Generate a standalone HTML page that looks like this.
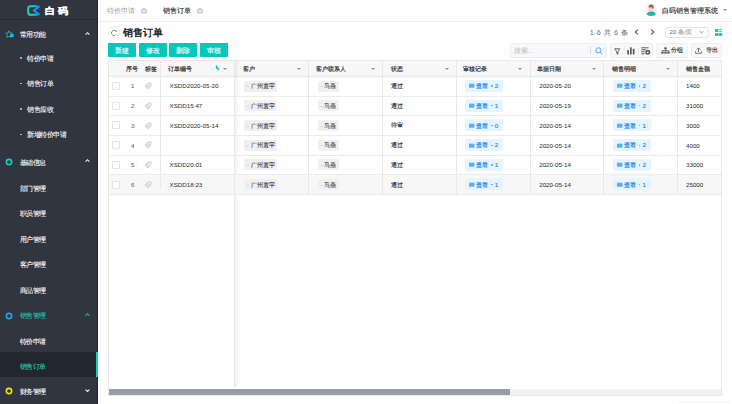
<!DOCTYPE html>
<html><head><meta charset="utf-8">
<style>
*{box-sizing:border-box;margin:0;padding:0}
html,body{width:732px;height:404px;overflow:hidden;background:#fff;font-family:"Liberation Sans",sans-serif;color:#333}
.abs{position:absolute}
#side{position:absolute;left:0;top:0;width:98px;height:404px;background:#30353f;border-right:1px solid #1f232b}
#logo{position:absolute;left:0;top:0;width:98px;height:20px;border-bottom:1px solid #272b33}
.mi{position:absolute;left:0;width:98px;height:25px;font-size:7px;letter-spacing:-0.4px;color:#f4f4f4;line-height:25px;white-space:nowrap;-webkit-text-stroke:0.12px currentColor}
.mi .t{position:absolute;left:19.5px;top:0}
.mi.sub .t{left:27px}
.mi.sub:before{content:"";position:absolute;left:20px;top:11.5px;width:1.6px;height:1.6px;border-radius:1px;background:#ccc}
.chev{position:absolute;left:85px;width:5px;height:5px}
.ring{position:absolute;left:4.9px;width:6.5px;height:6.5px;border-radius:50%;border:1.8px solid}
#hdr{position:absolute;left:98px;top:0;width:634px;height:22px;border-bottom:1px solid #ececec;background:#fff}
.tab{position:absolute;top:0.7px;height:20px;line-height:20px;font-size:7px;white-space:nowrap}
.x{position:absolute;top:7.9px;width:6px;height:6px;border-radius:50%;background:#c9d2db}
.x:after{content:"";position:absolute;left:1.8px;top:1.8px;width:2.4px;height:2.4px;border-radius:0.6px;background:#eef1f4}
.btn{position:absolute;top:43px;width:28px;height:14px;background:#02c9bb;color:#fff;font-size:6.5px;letter-spacing:-0.4px;line-height:15px;text-align:center;border-radius:1px;-webkit-text-stroke:0.1px #fff}
#tbl{position:absolute;left:108px;top:60px;width:614px;height:327px;border:1px solid #e8e8e8;border-bottom:none;overflow:hidden}
.th{position:absolute;top:0;height:16px;background:#f7f7f8;border-bottom:1px solid #e6e6e6}
.hc{position:absolute;top:0;height:16px;line-height:16px;font-size:5.5px;color:#333;-webkit-text-stroke:0.2px #333;white-space:nowrap}
.vl{position:absolute;top:0;width:1px;background:#e8e8e8;z-index:2}
.hl{position:absolute;left:0;height:1px;background:#ececec}
.arr{position:absolute;top:7px;width:0;height:0;border-left:2.2px solid transparent;border-right:2.2px solid transparent;border-top:2.5px solid #8b8f96}
.c{position:absolute;font-size:5.5px;color:#333;white-space:nowrap;line-height:8px;-webkit-text-stroke:0.15px #333}
.c.code,.c.date,.c.amt,.c.idx{font-size:6.2px;color:#333;margin-top:0.4px;-webkit-text-stroke:0.04px #333}
.c.idx{color:#666}
.gt{position:absolute;height:11px;background:#f0f0f0;font-size:5.5px;line-height:11px;color:#333;border-radius:1px;white-space:nowrap;-webkit-text-stroke:0.08px #333}
.bt{position:absolute;height:12px;background:#e6f4ff;font-size:5.5px;line-height:12px;color:#2b8def;border-radius:1px;white-space:nowrap;-webkit-text-stroke:0.2px #2b8def}
.cb{position:absolute;left:4px;width:8px;height:8px;border:1px solid #e3e3e3;border-radius:1px;background:#fff}
</style></head><body>

<div id="side">
  <div id="logo">
    <svg class="abs" style="left:27px;top:5px" width="14" height="11" viewBox="0 0 14 11">
      <defs><linearGradient id="lg" x1="0" y1="0" x2="1" y2="0"><stop offset="0.6" stop-color="#16d3b8"/><stop offset="1" stop-color="#1aa8e0"/></linearGradient></defs>
      <path d="M10.4 1.25 H3.6 Q1.25 1.25 1.25 3.6 V7.4 Q1.25 9.75 3.6 9.75 H10.4" fill="none" stroke="url(#lg)" stroke-width="2.05"/>
      <path d="M12.5 1.1 L7 5.5 L12.5 9.9" fill="none" stroke="#1b8ff4" stroke-width="2.1"/>
    </svg>
    <div class="abs" style="left:44.6px;top:4.6px;font-size:9px;line-height:12px;color:#fff;font-weight:bold;letter-spacing:3px;-webkit-text-stroke:0.45px #fff;transform:scaleX(1.12);transform-origin:0 0">白码</div>
  </div>

  <div class="mi" style="top:22px">
    <svg class="abs" style="left:4.5px;top:8px" width="9" height="9" viewBox="0 0 9 9"><path d="M4 0.8 L5 3 L7.4 3.3 L5.6 4.9 L6.1 7.4 L4 6.2 L1.9 7.4 L2.4 4.9 L0.6 3.3 L3 3 Z" fill="none" stroke="#19b9a8" stroke-width="0.9" stroke-linejoin="round"/><circle cx="7" cy="5.4" r="1.85" fill="#22b2fa"/></svg>
    <span class="t">常用功能</span>
    <svg class="chev" style="top:9.1px" viewBox="0 0 5 5"><path d="M0.6 3.6 L2.5 1.7 L4.4 3.6" fill="none" stroke="#f0f0f0" stroke-width="1.1"/></svg>
  </div>
  <div class="mi sub" style="top:45.5px"><span class="t">特价申请</span></div>
  <div class="mi sub" style="top:71px"><span class="t">销售订单</span></div>
  <div class="mi sub" style="top:96.5px"><span class="t">销售应收</span></div>
  <div class="mi sub" style="top:122px"><span class="t">新增特价申请</span></div>

  <div class="mi" style="top:149.5px">
    <svg class="abs" style="left:4.5px;top:8.8px" width="8" height="8" viewBox="0 0 8 8"><circle cx="4" cy="4" r="2.65" fill="none" stroke="#12d3bd" stroke-width="1.6"/></svg>
    <span class="t">基础信息</span>
    <svg class="chev" style="top:8.7px" viewBox="0 0 5 5"><path d="M0.6 3.6 L2.5 1.7 L4.4 3.6" fill="none" stroke="#f0f0f0" stroke-width="1.1"/></svg>
  </div>
  <div class="mi" style="top:175.5px"><span class="t">部门管理</span></div>
  <div class="mi" style="top:201px"><span class="t">职员管理</span></div>
  <div class="mi" style="top:226.5px"><span class="t">用户管理</span></div>
  <div class="mi" style="top:252px"><span class="t">客户管理</span></div>
  <div class="mi" style="top:278px"><span class="t">商品管理</span></div>

  <div class="mi" style="top:303px;color:#1bbfae">
    <svg class="abs" style="left:4.5px;top:8.8px" width="8" height="8" viewBox="0 0 8 8"><circle cx="4" cy="4" r="2.65" fill="none" stroke="#19a8f0" stroke-width="1.6"/></svg>
    <span class="t">销售管理</span>
    <svg class="chev" style="top:8.7px" viewBox="0 0 5 5"><path d="M0.6 3.6 L2.5 1.7 L4.4 3.6" fill="none" stroke="#1bbfae" stroke-width="1.1"/></svg>
  </div>
  <div class="mi" style="top:328.5px"><span class="t">特价申请</span></div>
  <div class="mi" style="top:352px;background:#22262e;color:#1fc6b2"><span class="t" style="top:1.8px">销售订单</span><span class="abs" style="left:96px;top:0;width:2px;height:25px;background:#14d0bd"></span></div>
  <div class="mi" style="top:378.5px">
    <svg class="abs" style="left:4.5px;top:8.8px" width="8" height="8" viewBox="0 0 8 8"><circle cx="4" cy="4" r="2.65" fill="none" stroke="#f2e61a" stroke-width="1.6"/></svg>
    <span class="t">财务管理</span>
    <svg class="chev" style="top:9px" viewBox="0 0 5 5"><path d="M0.6 1.6 L2.5 3.5 L4.4 1.6" fill="none" stroke="#f0f0f0" stroke-width="1.1"/></svg>
  </div>
</div>

<div class="abs" style="left:100px;top:0;width:1px;height:404px;background:#f4f4f4;z-index:5"></div>
<div id="hdr">
  <div class="tab" style="left:9px;color:#a0a0a0">特价申请</div>
  <div class="x" style="left:43px"></div>
  <div class="tab" style="left:65px;color:#333;-webkit-text-stroke:0.15px #333">销售订单</div>
  <div class="x" style="left:99px"></div>
  <svg class="abs" style="left:547.2px;top:4.2px" width="12" height="12" viewBox="0 0 12 12">
    <circle cx="6" cy="6" r="6" fill="#fcefe8"/>
    <path d="M1.8 10.4 Q2.2 7.6 6.2 7.3 Q10.4 7.6 10.9 10.2 Q9 12.1 6.2 12 Q3.5 12 1.8 10.4Z" fill="#1cb8b4"/>
    <path d="M3.8 3.2 Q3.8 7.8 5.6 7.9 Q7.6 7.8 7.6 3.2 Z" fill="#f8d2bd"/>
    <path d="M3.6 3.6 Q3.4 0.6 6.2 0.5 Q8.8 0.6 8.7 3.6 Q8.6 5.2 7.6 5.6 Q7.8 3.8 6.8 3.2 Q5 3.4 3.6 3.6Z" fill="#9a5a5c"/>
  </svg>
  <div class="tab" style="left:564px;color:#333;-webkit-text-stroke:0.15px #333">白码销售管理系统</div>
  <div class="abs" style="left:625px;top:9px;border-left:2px solid transparent;border-right:2px solid transparent;border-top:2.5px solid #8b8f96"></div>
</div>

<!-- title -->
<div class="abs" style="left:108px;top:26.3px;width:12px;height:12px;border-radius:50%;border:1px solid #ececec"></div>
<svg class="abs" style="left:110px;top:28.5px" width="8" height="8" viewBox="0 0 8 8"><path d="M5.9 2.3 A2.55 2.55 0 1 0 5.9 5.7" fill="none" stroke="#808080" stroke-width="0.9"/><path d="M4.8 1.5 L6.8 1.2 L6.5 3.2 Z" fill="#808080"/></svg>
<div class="abs" style="left:123px;top:26px;font-size:10px;line-height:13px;font-weight:bold;color:#222">销售订单</div>

<div class="btn" style="left:108px">新建</div>
<div class="btn" style="left:139px">修改</div>
<div class="btn" style="left:169px">删除</div>
<div class="btn" style="left:200px">审核</div>

<!-- pagination -->
<div class="abs" style="left:590px;top:28px;font-size:6.5px;line-height:9px;color:#777;white-space:nowrap;-webkit-text-stroke:0.1px #777;letter-spacing:0.55px;word-spacing:0.5px">1-6 共 6 条</div>
<svg class="abs" style="left:634px;top:29px" width="5" height="6" viewBox="0 0 5 6"><path d="M3.8 0.6 L1.3 3 L3.8 5.4" fill="none" stroke="#4a566a" stroke-width="1.1"/></svg>
<svg class="abs" style="left:650px;top:29px" width="5" height="6" viewBox="0 0 5 6"><path d="M1.2 0.6 L3.7 3 L1.2 5.4" fill="none" stroke="#4a566a" stroke-width="1.1"/></svg>
<div class="abs" style="left:665px;top:27px;width:44px;height:10.5px;border:1px solid #e3e3e3;border-radius:2px"></div>
<div class="abs" style="left:669.5px;top:28.3px;font-size:6px;line-height:9px;color:#666;white-space:nowrap;letter-spacing:0.15px">20 条/页</div>
<svg class="abs" style="left:699px;top:30px" width="5" height="4" viewBox="0 0 5 4"><path d="M0.5 0.9 L2.5 2.9 L4.5 0.9" fill="none" stroke="#888" stroke-width="0.85"/></svg>
<svg class="abs" style="left:714.7px;top:28.9px" width="7.4" height="7.2" viewBox="0 0 7.4 7.2">
  <rect x="0" y="0" width="3.5" height="3.1" rx="1.1" fill="#12c6b2"/>
  <rect x="0" y="3.9" width="3.5" height="3.3" rx="1.1" fill="#12c6b2"/>
  <rect x="3.9" y="3.9" width="3.5" height="3.3" rx="1.1" fill="#12c6b2"/>
  <path d="M4.1 0.5 H6.1 Q7.1 0.5 7.1 1.55 Q7.1 2.6 6.1 2.6 H4.1" fill="none" stroke="#12c6b2" stroke-width="0.9"/>
</svg>

<!-- search & tools -->
<div class="abs" style="left:509.5px;top:43px;width:97.5px;height:14.7px;background:#f7f8f9;border:1px solid #efefef;border-radius:2px"></div>
<div class="abs" style="left:514px;top:46px;font-size:6.5px;line-height:9px;color:#bbb">搜索...</div>
<div class="abs" style="left:590px;top:46px;width:1px;height:8px;background:#ddd"></div>
<svg class="abs" style="left:595px;top:47px" width="8" height="8" viewBox="0 0 8 8"><circle cx="3.4" cy="3.4" r="2.6" fill="none" stroke="#3c9bf0" stroke-width="0.9"/><path d="M5.3 5.3 L7.2 7.2" stroke="#3c9bf0" stroke-width="0.9"/></svg>

<div class="abs" style="left:609.5px;top:43px;width:43.5px;height:14.7px;background:#f7f8f9;border:1px solid #efefef;border-radius:2px"></div>
<div class="abs" style="left:624px;top:46px;width:1px;height:8px;background:#f0f0f0"></div>
<div class="abs" style="left:638px;top:46px;width:1px;height:8px;background:#f0f0f0"></div>
<svg class="abs" style="left:614px;top:47.6px" width="7" height="7" viewBox="0 0 7 7"><path d="M0.7 0.8 H5.5 Q6.2 0.8 5.8 1.5 L3.9 3.4 V6.2 L2.8 5.6 V3.4 L0.9 1.5 Q0.5 0.8 0.7 0.8Z" fill="none" stroke="#555" stroke-width="0.95" stroke-linejoin="round"/></svg>
<svg class="abs" style="left:627.4px;top:47px" width="8" height="8" viewBox="0 0 8 8"><rect x="0.2" y="3" width="1.7" height="4.6" rx="0.5" fill="#5a5a5a"/><rect x="3" y="0.2" width="1.7" height="7.4" rx="0.5" fill="#5a5a5a"/><rect x="5.8" y="1.8" width="1.7" height="5.8" rx="0.5" fill="#5a5a5a"/></svg>
<svg class="abs" style="left:641px;top:47px" width="10" height="8" viewBox="0 0 10 8"><path d="M0.3 0.8 H7.5 M0.3 2.8 H5 M0.3 4.8 H3.6 M0.3 6.8 H3.6" stroke="#5a5a5a" stroke-width="1"/><circle cx="6.8" cy="5.3" r="2.5" fill="#5a5a5a"/><circle cx="6.8" cy="5.3" r="0.9" fill="#fff"/></svg>

<div class="abs" style="left:656px;top:43px;width:31.6px;height:14.7px;background:#f7f8f9;border:1px solid #efefef;border-radius:2px"></div>
<svg class="abs" style="left:660.5px;top:47px" width="9" height="7" viewBox="0 0 9 7"><rect x="3.3" y="0.3" width="2.4" height="2" fill="#555"/><path d="M4.5 2.3 V3.5 M1.5 3.5 H7.5 M1.5 3.5 V4.6 M7.5 3.5 V4.6 M4.5 3.5 V4.6" stroke="#555" stroke-width="0.7" fill="none"/><rect x="0.3" y="4.6" width="2.4" height="2" fill="#555"/><rect x="3.3" y="4.6" width="2.4" height="2" fill="#555"/><rect x="6.3" y="4.6" width="2.4" height="2" fill="#555"/></svg>
<div class="abs" style="left:671px;top:46px;font-size:6px;line-height:9px;color:#333;-webkit-text-stroke:0.15px #333">分组</div>

<div class="abs" style="left:690.5px;top:43px;width:31.5px;height:14.7px;background:#f7f8f9;border:1px solid #efefef;border-radius:2px"></div>
<svg class="abs" style="left:694.5px;top:47px" width="7" height="7" viewBox="0 0 7 7"><path d="M3.5 5 V1 M1.8 2.6 L3.5 0.9 L5.2 2.6 M0.6 4.2 V6.3 H6.4 V4.2" fill="none" stroke="#555" stroke-width="0.8"/></svg>
<div class="abs" style="left:705.5px;top:46px;font-size:6px;line-height:9px;color:#333;-webkit-text-stroke:0.15px #333">导出</div>

<!-- table -->
<div id="tbl">
  <div class="th" style="left:0;width:612px"></div>
  <!-- frozen shadow -->
  <div class="abs" style="left:125.3px;top:0;width:5px;height:336px;background:linear-gradient(to right,rgba(0,0,0,0.07),rgba(0,0,0,0))"></div>
  <div class="vl" style="left:51.3px;height:128px"></div>
  <div class="vl" style="left:125.3px;height:336px"></div>
  <div class="vl" style="left:199.4px;height:133px"></div>
  <div class="vl" style="left:273px;height:133px"></div>
  <div class="vl" style="left:347.4px;height:133px"></div>
  <div class="vl" style="left:421.4px;height:133px"></div>
  <div class="vl" style="left:494.2px;height:133px"></div>
  <div class="vl" style="left:568.4px;height:133px"></div>

  <div class="hc" style="left:17px">序号</div>
  <div class="hc" style="left:35.8px">标签</div>
  <div class="hc" style="left:59.2px">订单编号</div>
  <svg class="abs" style="left:106.3px;top:3.8px" width="6" height="7" viewBox="0 0 6 7"><path d="M0.5 0.6 Q1.4 -0.1 2.1 0.5 L2.6 2.3 L4.1 3.4 Q4.3 4.4 3.5 4.7 L1.5 4.3 L0.9 2.4 Z" fill="#12c6b2"/><path d="M3 4.4 L4.2 6.1" stroke="#12c6b2" stroke-width="0.7"/></svg>
  <div class="arr" style="left:114.1px"></div>

  <div class="hc" style="left:133.5px">客户</div><div class="arr" style="left:188px"></div>
  <div class="hc" style="left:207px">客户联系人</div><div class="arr" style="left:262px"></div>
  <div class="hc" style="left:282px">状态</div><div class="arr" style="left:336px"></div>
  <div class="hc" style="left:354.3px">审核记录</div><div class="arr" style="left:409px"></div>
  <div class="hc" style="left:428.3px">单据日期</div><div class="arr" style="left:483px"></div>
  <div class="hc" style="left:503px">销售明细</div><div class="arr" style="left:557px"></div>
  <div class="hc" style="left:577px">销售金额</div>

  <!--ROWS--><div class="hl" style="top:34.50px;width:612px"></div>
<div class="cb" style="left:3.20px;top:21.05px"></div>
<div class="c idx" style="left:21.90px;top:21.05px">1</div>
<svg class="abs" style="left:34.80px;top:21.15px" width="8" height="8" viewBox="0 0 8 8"><path d="M4.3 1 H7 V3.7 L3.8 6.9 L1.1 4.2 Z" fill="#dedede" stroke="#d8d8d8" stroke-width="1.1" stroke-linejoin="round"/><circle cx="5.4" cy="2.6" r="0.75" fill="#fff"/></svg>
<div class="c code" style="left:60.60px;top:21.05px">XSDD2020-05-20</div>
<div class="gt" style="left:135.10px;top:19.65px;width:32.8px"><span style="position:absolute;left:3px;top:0.6px;color:#555">·</span><span style="position:absolute;left:6.6px;top:0.6px">广州寰宇</span></div>
<div class="gt" style="left:208.80px;top:19.65px;width:20.8px"><span style="position:absolute;left:3px;top:0.6px;color:#555">·</span><span style="position:absolute;left:6.6px;top:0.6px">马燕</span></div>
<div class="c" style="left:282.40px;top:21.05px">通过</div>
<div class="bt" style="left:356.30px;top:18.85px;width:38px"><svg class="abs" style="left:3.7px;top:3.6px" width="6" height="6" viewBox="0 0 6 6"><rect x="0" y="0.6" width="5.4" height="4.4" rx="0.5" fill="#7dc1f8"/><path d="M0 1.9 H5.4 M0 3.1 H5.4" stroke="#3f9ff2" stroke-width="0.8"/></svg><span style="position:absolute;left:11px;top:0.5px">查看</span><span style="position:absolute;left:26.2px;top:5.6px;width:1.3px;height:1.3px;border-radius:50%;background:#5aaaf2"></span><span style="position:absolute;left:29.5px;top:0.5px;font-size:6.2px">2</span></div>
<div class="bt" style="left:504.00px;top:18.85px;width:38px"><svg class="abs" style="left:3.7px;top:3.6px" width="6" height="6" viewBox="0 0 6 6"><rect x="0" y="0.6" width="5.4" height="4.4" rx="0.5" fill="#7dc1f8"/><path d="M0 1.9 H5.4 M0 3.1 H5.4" stroke="#3f9ff2" stroke-width="0.8"/></svg><span style="position:absolute;left:11px;top:0.5px">查看</span><span style="position:absolute;left:26.2px;top:5.6px;width:1.3px;height:1.3px;border-radius:50%;background:#5aaaf2"></span><span style="position:absolute;left:29.5px;top:0.5px;font-size:6.2px">2</span></div>
<div class="c date" style="left:430.20px;top:21.05px">2020-05-20</div>
<div class="c amt" style="left:577.00px;top:21.05px">1400</div>
<div class="hl" style="top:54.20px;width:612px"></div>
<div class="cb" style="left:3.20px;top:40.75px"></div>
<div class="c idx" style="left:21.90px;top:40.75px">2</div>
<svg class="abs" style="left:34.80px;top:40.85px" width="8" height="8" viewBox="0 0 8 8"><path d="M4.3 1 H7 V3.7 L3.8 6.9 L1.1 4.2 Z" fill="#dedede" stroke="#d8d8d8" stroke-width="1.1" stroke-linejoin="round"/><circle cx="5.4" cy="2.6" r="0.75" fill="#fff"/></svg>
<div class="c code" style="left:60.60px;top:40.75px">XSDD15:47</div>
<div class="gt" style="left:135.10px;top:39.35px;width:32.8px"><span style="position:absolute;left:3px;top:0.6px;color:#555">·</span><span style="position:absolute;left:6.6px;top:0.6px">广州寰宇</span></div>
<div class="gt" style="left:208.80px;top:39.35px;width:20.8px"><span style="position:absolute;left:3px;top:0.6px;color:#555">·</span><span style="position:absolute;left:6.6px;top:0.6px">马燕</span></div>
<div class="c" style="left:282.40px;top:40.75px">通过</div>
<div class="bt" style="left:356.30px;top:38.55px;width:38px"><svg class="abs" style="left:3.7px;top:3.6px" width="6" height="6" viewBox="0 0 6 6"><rect x="0" y="0.6" width="5.4" height="4.4" rx="0.5" fill="#7dc1f8"/><path d="M0 1.9 H5.4 M0 3.1 H5.4" stroke="#3f9ff2" stroke-width="0.8"/></svg><span style="position:absolute;left:11px;top:0.5px">查看</span><span style="position:absolute;left:26.2px;top:5.6px;width:1.3px;height:1.3px;border-radius:50%;background:#5aaaf2"></span><span style="position:absolute;left:29.5px;top:0.5px;font-size:6.2px">1</span></div>
<div class="bt" style="left:504.00px;top:38.55px;width:38px"><svg class="abs" style="left:3.7px;top:3.6px" width="6" height="6" viewBox="0 0 6 6"><rect x="0" y="0.6" width="5.4" height="4.4" rx="0.5" fill="#7dc1f8"/><path d="M0 1.9 H5.4 M0 3.1 H5.4" stroke="#3f9ff2" stroke-width="0.8"/></svg><span style="position:absolute;left:11px;top:0.5px">查看</span><span style="position:absolute;left:26.2px;top:5.6px;width:1.3px;height:1.3px;border-radius:50%;background:#5aaaf2"></span><span style="position:absolute;left:29.5px;top:0.5px;font-size:6.2px">2</span></div>
<div class="c date" style="left:430.20px;top:40.75px">2020-05-19</div>
<div class="c amt" style="left:577.00px;top:40.75px">31000</div>
<div class="hl" style="top:73.90px;width:612px"></div>
<div class="cb" style="left:3.20px;top:60.45px"></div>
<div class="c idx" style="left:21.90px;top:60.45px">3</div>
<svg class="abs" style="left:34.80px;top:60.55px" width="8" height="8" viewBox="0 0 8 8"><path d="M4.3 1 H7 V3.7 L3.8 6.9 L1.1 4.2 Z" fill="#dedede" stroke="#d8d8d8" stroke-width="1.1" stroke-linejoin="round"/><circle cx="5.4" cy="2.6" r="0.75" fill="#fff"/></svg>
<div class="c code" style="left:60.60px;top:60.45px">XSDD2020-05-14</div>
<div class="gt" style="left:135.10px;top:59.05px;width:32.8px"><span style="position:absolute;left:3px;top:0.6px;color:#555">·</span><span style="position:absolute;left:6.6px;top:0.6px">广州寰宇</span></div>
<div class="gt" style="left:208.80px;top:59.05px;width:20.8px"><span style="position:absolute;left:3px;top:0.6px;color:#555">·</span><span style="position:absolute;left:6.6px;top:0.6px">马燕</span></div>
<div class="c" style="left:282.40px;top:60.45px">待审</div>
<div class="bt" style="left:356.30px;top:58.25px;width:38px"><svg class="abs" style="left:3.7px;top:3.6px" width="6" height="6" viewBox="0 0 6 6"><rect x="0" y="0.6" width="5.4" height="4.4" rx="0.5" fill="#7dc1f8"/><path d="M0 1.9 H5.4 M0 3.1 H5.4" stroke="#3f9ff2" stroke-width="0.8"/></svg><span style="position:absolute;left:11px;top:0.5px">查看</span><span style="position:absolute;left:26.2px;top:5.6px;width:1.3px;height:1.3px;border-radius:50%;background:#5aaaf2"></span><span style="position:absolute;left:29.5px;top:0.5px;font-size:6.2px">0</span></div>
<div class="bt" style="left:504.00px;top:58.25px;width:38px"><svg class="abs" style="left:3.7px;top:3.6px" width="6" height="6" viewBox="0 0 6 6"><rect x="0" y="0.6" width="5.4" height="4.4" rx="0.5" fill="#7dc1f8"/><path d="M0 1.9 H5.4 M0 3.1 H5.4" stroke="#3f9ff2" stroke-width="0.8"/></svg><span style="position:absolute;left:11px;top:0.5px">查看</span><span style="position:absolute;left:26.2px;top:5.6px;width:1.3px;height:1.3px;border-radius:50%;background:#5aaaf2"></span><span style="position:absolute;left:29.5px;top:0.5px;font-size:6.2px">1</span></div>
<div class="c date" style="left:430.20px;top:60.45px">2020-05-14</div>
<div class="c amt" style="left:577.00px;top:60.45px">3000</div>
<div class="hl" style="top:93.60px;width:612px"></div>
<div class="cb" style="left:3.20px;top:80.15px"></div>
<div class="c idx" style="left:21.90px;top:80.15px">4</div>
<svg class="abs" style="left:34.80px;top:80.25px" width="8" height="8" viewBox="0 0 8 8"><path d="M4.3 1 H7 V3.7 L3.8 6.9 L1.1 4.2 Z" fill="#dedede" stroke="#d8d8d8" stroke-width="1.1" stroke-linejoin="round"/><circle cx="5.4" cy="2.6" r="0.75" fill="#fff"/></svg>
<div class="gt" style="left:135.10px;top:78.75px;width:32.8px"><span style="position:absolute;left:3px;top:0.6px;color:#555">·</span><span style="position:absolute;left:6.6px;top:0.6px">广州寰宇</span></div>
<div class="gt" style="left:208.80px;top:78.75px;width:20.8px"><span style="position:absolute;left:3px;top:0.6px;color:#555">·</span><span style="position:absolute;left:6.6px;top:0.6px">马燕</span></div>
<div class="c" style="left:282.40px;top:80.15px">通过</div>
<div class="bt" style="left:356.30px;top:77.95px;width:38px"><svg class="abs" style="left:3.7px;top:3.6px" width="6" height="6" viewBox="0 0 6 6"><rect x="0" y="0.6" width="5.4" height="4.4" rx="0.5" fill="#7dc1f8"/><path d="M0 1.9 H5.4 M0 3.1 H5.4" stroke="#3f9ff2" stroke-width="0.8"/></svg><span style="position:absolute;left:11px;top:0.5px">查看</span><span style="position:absolute;left:26.2px;top:5.6px;width:1.3px;height:1.3px;border-radius:50%;background:#5aaaf2"></span><span style="position:absolute;left:29.5px;top:0.5px;font-size:6.2px">2</span></div>
<div class="bt" style="left:504.00px;top:77.95px;width:38px"><svg class="abs" style="left:3.7px;top:3.6px" width="6" height="6" viewBox="0 0 6 6"><rect x="0" y="0.6" width="5.4" height="4.4" rx="0.5" fill="#7dc1f8"/><path d="M0 1.9 H5.4 M0 3.1 H5.4" stroke="#3f9ff2" stroke-width="0.8"/></svg><span style="position:absolute;left:11px;top:0.5px">查看</span><span style="position:absolute;left:26.2px;top:5.6px;width:1.3px;height:1.3px;border-radius:50%;background:#5aaaf2"></span><span style="position:absolute;left:29.5px;top:0.5px;font-size:6.2px">2</span></div>
<div class="c date" style="left:430.20px;top:80.15px">2020-05-14</div>
<div class="c amt" style="left:577.00px;top:80.15px">4000</div>
<div class="hl" style="top:113.30px;width:612px"></div>
<div class="cb" style="left:3.20px;top:99.85px"></div>
<div class="c idx" style="left:21.90px;top:99.85px">5</div>
<svg class="abs" style="left:34.80px;top:99.95px" width="8" height="8" viewBox="0 0 8 8"><path d="M4.3 1 H7 V3.7 L3.8 6.9 L1.1 4.2 Z" fill="#dedede" stroke="#d8d8d8" stroke-width="1.1" stroke-linejoin="round"/><circle cx="5.4" cy="2.6" r="0.75" fill="#fff"/></svg>
<div class="c code" style="left:60.60px;top:99.85px">XSDD20:01</div>
<div class="gt" style="left:135.10px;top:98.45px;width:32.8px"><span style="position:absolute;left:3px;top:0.6px;color:#555">·</span><span style="position:absolute;left:6.6px;top:0.6px">广州寰宇</span></div>
<div class="gt" style="left:208.80px;top:98.45px;width:20.8px"><span style="position:absolute;left:3px;top:0.6px;color:#555">·</span><span style="position:absolute;left:6.6px;top:0.6px">马燕</span></div>
<div class="c" style="left:282.40px;top:99.85px">通过</div>
<div class="bt" style="left:356.30px;top:97.65px;width:38px"><svg class="abs" style="left:3.7px;top:3.6px" width="6" height="6" viewBox="0 0 6 6"><rect x="0" y="0.6" width="5.4" height="4.4" rx="0.5" fill="#7dc1f8"/><path d="M0 1.9 H5.4 M0 3.1 H5.4" stroke="#3f9ff2" stroke-width="0.8"/></svg><span style="position:absolute;left:11px;top:0.5px">查看</span><span style="position:absolute;left:26.2px;top:5.6px;width:1.3px;height:1.3px;border-radius:50%;background:#5aaaf2"></span><span style="position:absolute;left:29.5px;top:0.5px;font-size:6.2px">1</span></div>
<div class="bt" style="left:504.00px;top:97.65px;width:38px"><svg class="abs" style="left:3.7px;top:3.6px" width="6" height="6" viewBox="0 0 6 6"><rect x="0" y="0.6" width="5.4" height="4.4" rx="0.5" fill="#7dc1f8"/><path d="M0 1.9 H5.4 M0 3.1 H5.4" stroke="#3f9ff2" stroke-width="0.8"/></svg><span style="position:absolute;left:11px;top:0.5px">查看</span><span style="position:absolute;left:26.2px;top:5.6px;width:1.3px;height:1.3px;border-radius:50%;background:#5aaaf2"></span><span style="position:absolute;left:29.5px;top:0.5px;font-size:6.2px">2</span></div>
<div class="c date" style="left:430.20px;top:99.85px">2020-05-14</div>
<div class="c amt" style="left:577.00px;top:99.85px">33000</div>
<div class="abs" style="left:0;top:113.80px;width:612px;height:19.70px;background:#f7f7f7"></div>
<div class="hl" style="top:133.00px;width:612px"></div>
<div class="cb" style="left:3.20px;top:119.55px"></div>
<div class="c idx" style="left:21.90px;top:119.55px">6</div>
<svg class="abs" style="left:34.80px;top:119.65px" width="8" height="8" viewBox="0 0 8 8"><path d="M4.3 1 H7 V3.7 L3.8 6.9 L1.1 4.2 Z" fill="#dedede" stroke="#d8d8d8" stroke-width="1.1" stroke-linejoin="round"/><circle cx="5.4" cy="2.6" r="0.75" fill="#fff"/></svg>
<div class="c code" style="left:60.60px;top:119.55px">XSDD18:23</div>
<div class="gt" style="left:135.10px;top:118.15px;width:32.8px"><span style="position:absolute;left:3px;top:0.6px;color:#555">·</span><span style="position:absolute;left:6.6px;top:0.6px">广州寰宇</span></div>
<div class="gt" style="left:208.80px;top:118.15px;width:20.8px"><span style="position:absolute;left:3px;top:0.6px;color:#555">·</span><span style="position:absolute;left:6.6px;top:0.6px">马燕</span></div>
<div class="c" style="left:282.40px;top:119.55px">通过</div>
<div class="bt" style="left:356.30px;top:117.35px;width:38px"><svg class="abs" style="left:3.7px;top:3.6px" width="6" height="6" viewBox="0 0 6 6"><rect x="0" y="0.6" width="5.4" height="4.4" rx="0.5" fill="#7dc1f8"/><path d="M0 1.9 H5.4 M0 3.1 H5.4" stroke="#3f9ff2" stroke-width="0.8"/></svg><span style="position:absolute;left:11px;top:0.5px">查看</span><span style="position:absolute;left:26.2px;top:5.6px;width:1.3px;height:1.3px;border-radius:50%;background:#5aaaf2"></span><span style="position:absolute;left:29.5px;top:0.5px;font-size:6.2px">1</span></div>
<div class="bt" style="left:504.00px;top:117.35px;width:38px"><svg class="abs" style="left:3.7px;top:3.6px" width="6" height="6" viewBox="0 0 6 6"><rect x="0" y="0.6" width="5.4" height="4.4" rx="0.5" fill="#7dc1f8"/><path d="M0 1.9 H5.4 M0 3.1 H5.4" stroke="#3f9ff2" stroke-width="0.8"/></svg><span style="position:absolute;left:11px;top:0.5px">查看</span><span style="position:absolute;left:26.2px;top:5.6px;width:1.3px;height:1.3px;border-radius:50%;background:#5aaaf2"></span><span style="position:absolute;left:29.5px;top:0.5px;font-size:6.2px">1</span></div>
<div class="c date" style="left:430.20px;top:119.55px">2020-05-14</div>
<div class="c amt" style="left:577.00px;top:119.55px">25000</div><!--/ROWS-->
</div>

<!-- scrollbar -->
<div class="abs" style="left:108px;top:387px;width:614px;height:9px;background:#fff;border:1px solid #e8e8e8;border-top:none;z-index:10"></div>
<div class="abs" style="left:109px;top:388.8px;width:612px;height:6.5px;background:#f1f1f1;z-index:10"></div>
<div class="abs" style="left:678px;top:401.5px;width:52px;height:4px;border:1px solid #f5f5f5;border-radius:2px"></div>
<div class="abs" style="left:109px;top:389px;width:401px;height:6.3px;background:#989ca6;border-radius:0.5px;z-index:11"></div>

</body></html>
